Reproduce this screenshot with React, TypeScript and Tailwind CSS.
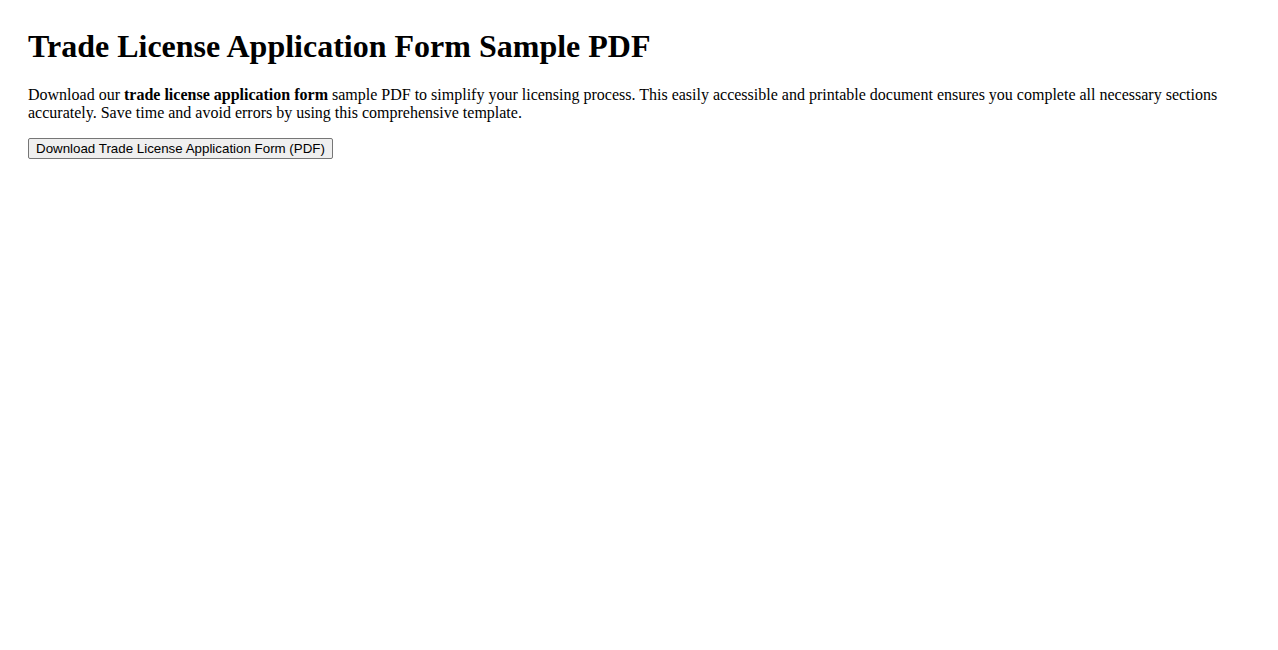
export default function App() {
  return (
    <div className="min-h-screen bg-white px-[28px] pt-[28px] text-black" style={{ fontFamily: '"Liberation Serif", "Times New Roman", serif' }}>
      <h1 className="mb-[21px] text-[32px] font-bold leading-[37px]">Trade License Application Form Sample PDF</h1>
      <p className="mb-[14px] text-[16px] leading-[18px]">
        Download our <strong className="font-bold">trade license application form</strong> sample PDF to simplify your licensing process. This easily accessible and printable document ensures you complete all necessary sections accurately. Save time and avoid errors by using this comprehensive template.
      </p>
      <button
        className="h-[21px] rounded-[2px] border border-[#767676] bg-[#efefef] px-[7px] text-[13.33px] leading-[15px] text-black"
        style={{ fontFamily: '"Liberation Sans", Arial, sans-serif' }}
      >
        Download Trade License Application Form (PDF)
      </button>
    </div>
  );
}
